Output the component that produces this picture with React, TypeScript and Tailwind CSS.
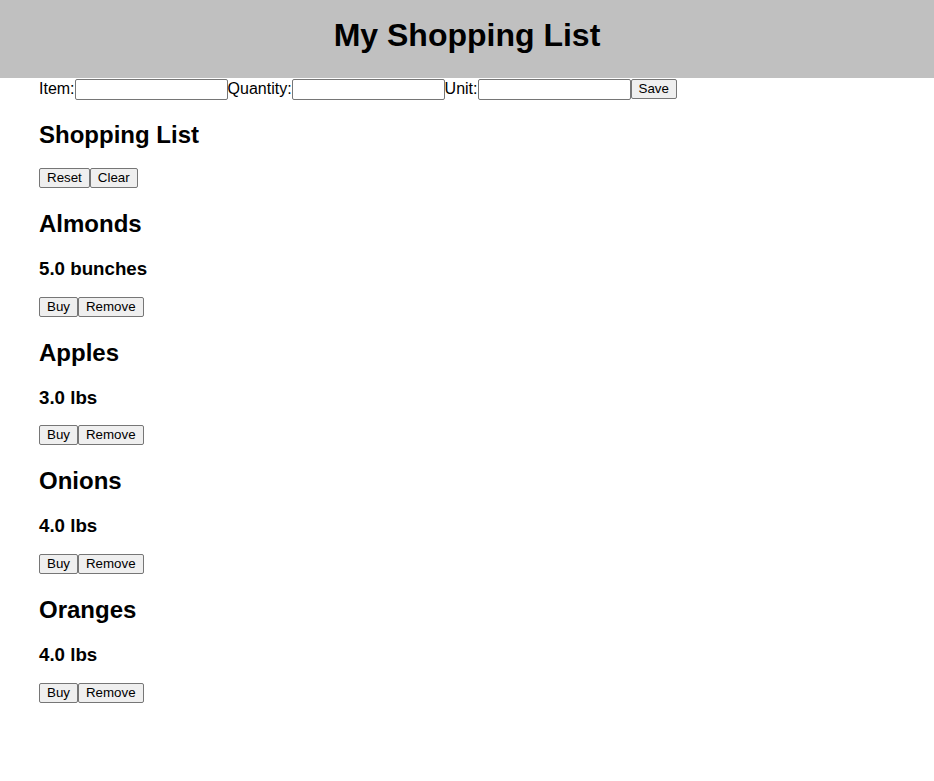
import React, { useState } from 'react';

interface Item {
  name: string;
  quantity: string;
  unit: string;
}

const initialItems: Item[] = [
  { name: 'Almonds', quantity: '5.0', unit: 'bunches' },
  { name: 'Apples', quantity: '3.0', unit: 'lbs' },
  { name: 'Onions', quantity: '4.0', unit: 'lbs' },
  { name: 'Oranges', quantity: '4.0', unit: 'lbs' },
];

function Btn({ children, onClick }: { children: React.ReactNode; onClick?: () => void }) {
  return (
    <button
      onClick={onClick}
      className="h-[20px] px-[7px] bg-[#efefef] border border-[#767676] rounded-[2px] text-[13.33px] leading-[16px] text-black font-['Liberation_Sans',Arial,sans-serif]"
    >
      {children}
    </button>
  );
}

export default function App() {
  const [items, setItems] = useState<Item[]>(initialItems);

  return (
    <div className="min-h-[781px] bg-white text-black font-['Liberation_Sans',Arial,sans-serif]">
      {/* Header */}
      <header className="h-[78px] bg-[#c0c0c0] flex justify-center pt-[16px]">
        <h1 className="text-[32px] leading-[38px] font-bold">My Shopping List</h1>
      </header>

      <div className="pl-[39px]">
        {/* Add form */}
        <form className="flex items-center h-[22px]" onSubmit={(e) => e.preventDefault()}>
          <label className="text-[16px] leading-[20px]">Item:</label>
          <input className="w-[153px] h-[21px] border border-[#767676] rounded-[2px]" />
          <label className="text-[16px] leading-[20px]">Quantity:</label>
          <input className="w-[153px] h-[21px] border border-[#767676] rounded-[2px]" />
          <label className="text-[16px] leading-[20px]">Unit:</label>
          <input className="w-[153px] h-[21px] border border-[#767676] rounded-[2px]" />
          <Btn>Save</Btn>
        </form>

        <h2 className="mt-[21px] text-[24px] leading-[28px] font-bold">Shopping List</h2>
        <div className="mt-[19px] flex">
          <Btn onClick={() => setItems(initialItems)}>Reset</Btn>
          <Btn onClick={() => setItems([])}>Clear</Btn>
        </div>

        {/* Items */}
        <div className="flex flex-col">
          {items.map((item, i) => (
            <div key={i} className="flex flex-col items-start pt-[22px]">
              <h2 className="text-[24px] leading-[28px] font-bold">{item.name}</h2>
              <h3 className="mt-[20px] text-[18.72px] leading-[22px] font-bold">
                {item.quantity} {item.unit}
              </h3>
              <div className="mt-[16.7px] flex">
                <Btn>Buy</Btn>
                <Btn onClick={() => setItems(items.filter((_, j) => j !== i))}>Remove</Btn>
              </div>
            </div>
          ))}
        </div>
      </div>
    </div>
  );
}
